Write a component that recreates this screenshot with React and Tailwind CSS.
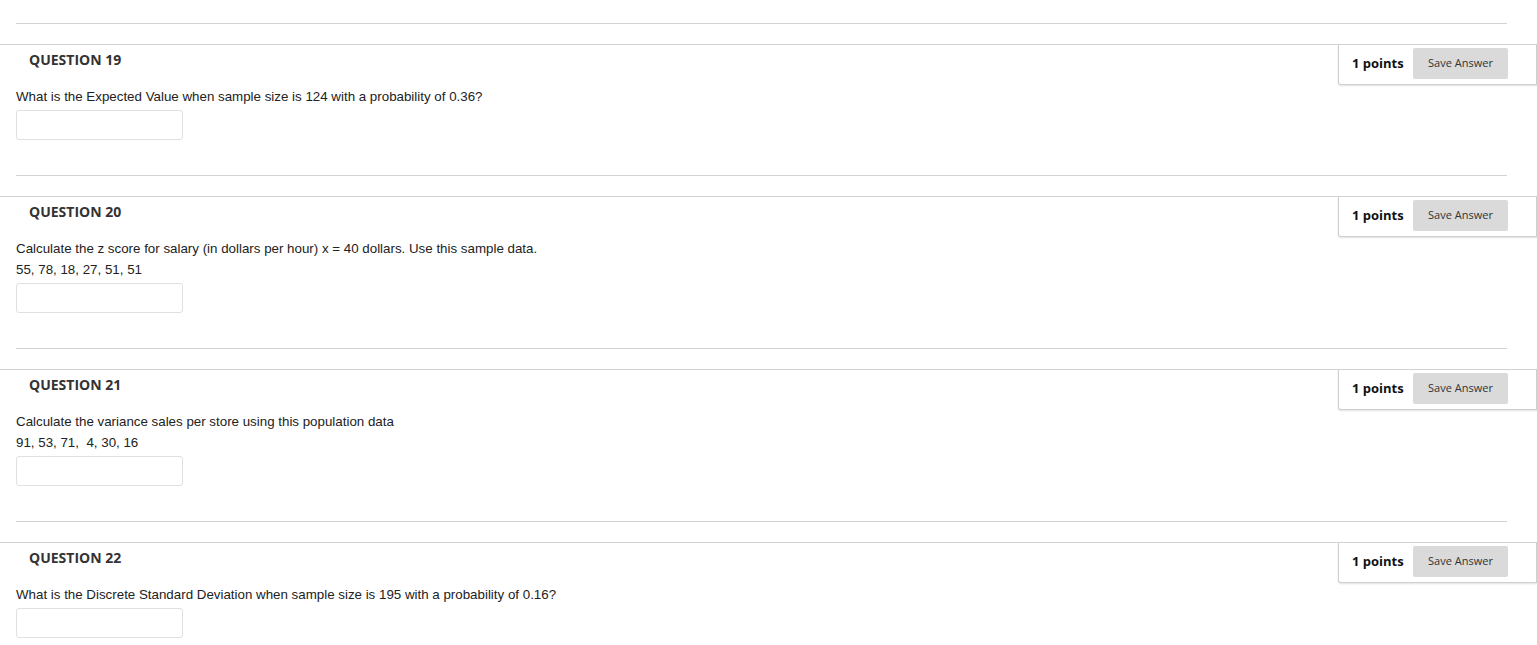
const QUESTIONS = [
  { n: 19, lines: ['What is the Expected Value when sample size is 124 with a probability of 0.36?'] },
  { n: 20, lines: ['Calculate the z score for salary (in dollars per hour) x = 40 dollars. Use this sample data.', '55, 78, 18, 27, 51, 51'] },
  { n: 21, lines: ['Calculate the variance sales per store using this population data', '91, 53, 71,\u00a0 4, 30, 16'] },
  { n: 22, lines: ['What is the Discrete Standard Deviation when sample size is 195 with a probability of 0.16?'] },
]

function PointsBox() {
  return (
    <div className="absolute top-0 right-0 flex items-center w-[199px] pt-[3px] pb-[5px] pl-[13px] border-l border-b border-r border-[#cfcfcf] rounded-bl-[3px] bg-white shadow-[0_1px_2px_rgba(0,0,0,0.12)]">
      <span className="flex-1 font-['Open_Sans',sans-serif] font-bold text-[13px] text-[#111]">1 points</span>
      <button className="w-[95px] h-[31px] mr-[28px] bg-[#dadada] rounded-[2px] font-['Open_Sans',sans-serif] text-[11px] text-[#333]">
        Save Answer
      </button>
    </div>
  )
}

function Question({ n, lines }) {
  return (
    <div className="pb-[35px]">
      <div className="ml-4 mr-[30px] border-t border-[#d2d2d2]" />
      <section className="relative mt-[20px] border-t border-[#d2d2d2]">
        <PointsBox />
        <h3 className="pt-[6px] pl-[29px] leading-[18px] font-['Open_Sans',sans-serif] font-bold text-[14px] text-[#333]">
          QUESTION {n}
        </h3>
        <div className="mt-[17px] pl-4 font-['Liberation_Sans',Arial,sans-serif] text-[13.33px] leading-[21px] text-[#222]">
          {lines.map((l, i) => <div key={i}>{l}</div>)}
        </div>
        <input type="text" className="block mt-[3px] ml-4 w-[167px] h-[30px] border border-[#e0e0e0] rounded-[3px] bg-white outline-none" />
      </section>
    </div>
  )
}

export default function App() {
  return (
    <div className="min-h-screen bg-white pt-[23px]">
      {QUESTIONS.map(q => <Question key={q.n} {...q} />)}
    </div>
  )
}
